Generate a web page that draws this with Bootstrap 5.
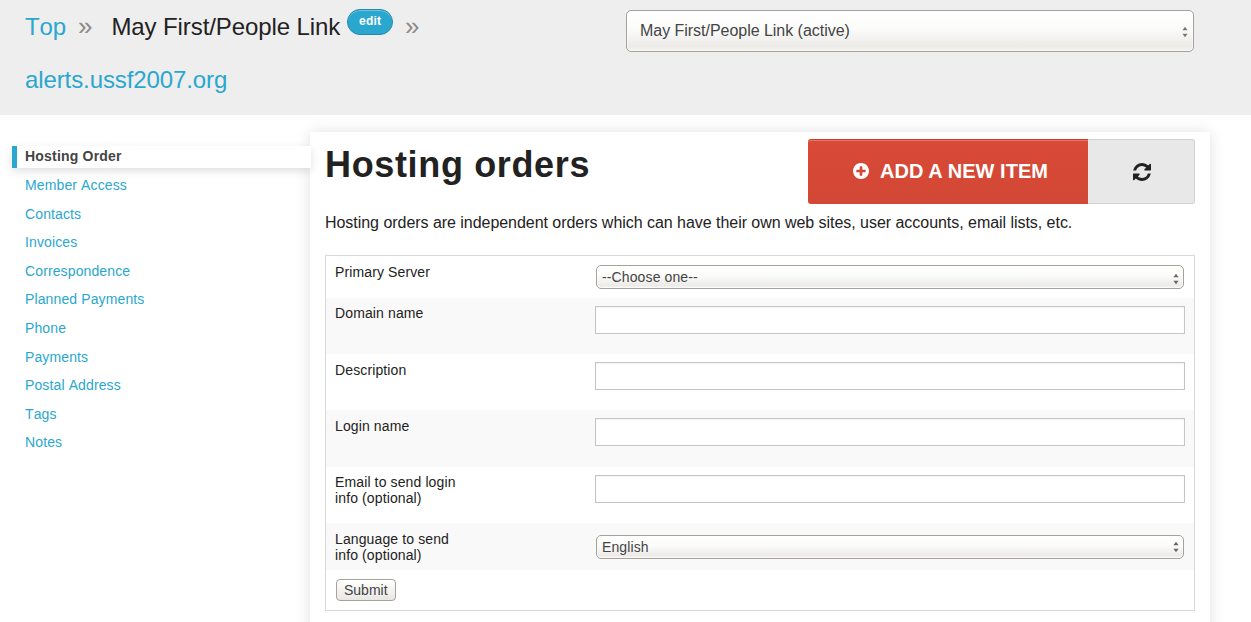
<!DOCTYPE html>
<html lang="en">
<head>
<meta charset="utf-8">
<title>Hosting orders</title>
<link href="https://cdn.jsdelivr.net/npm/bootstrap@5.3.0/dist/css/bootstrap.min.css" rel="stylesheet">
<style>
html,body{height:622px;overflow:hidden}
body{font-family:"Liberation Sans",Arial,sans-serif;font-size:14px;color:#222;background:#fff;font-kerning:none;letter-spacing:.12px}
a{color:#2aa7cf;text-decoration:none}
.top-band{height:115px;background:#eee;padding-left:25px}
.crumbs{width:601px;font-size:24px;line-height:27px;letter-spacing:-.1px}
.crumb-line{height:27px;margin-top:9px;white-space:nowrap}
.crumb-line.second{margin-top:30px}
.crumb-sep{color:#8a8a8a;font-size:26px;margin:0 19px 0 12px}
.crumb-sep.last{margin:0 0 0 12px}
.crumb-edit{display:inline-block;vertical-align:10px;height:26px;width:46px;margin-left:7px;border-radius:13px;background:#2aa7cf;border:1px solid #2089ab;color:#fff;font-size:12px;font-weight:700;line-height:22px;text-align:center;letter-spacing:.2px;box-shadow:inset 0 1px 0 rgba(255,255,255,.35)}
.native-pick{appearance:none;-webkit-appearance:none;display:block;color:#444;font-family:inherit;letter-spacing:.05px;border:1px solid #a5a19b;border-radius:5px;background-color:#f6f5f3;
 background-image:linear-gradient(to bottom,#fff 0,#fbfbfa 45%,#ecebe8 88%,#f5f4f2 100%);box-shadow:inset 0 0 0 1px rgba(255,255,255,.6)}
.pick-wrap{position:relative}
.pick-arrows{position:absolute;right:5px;top:50%;margin-top:0;width:6px;height:12px;pointer-events:none}
.arrows-top{right:6px}
.account-pick{width:568px;height:42px;margin-top:10px;padding:0 13px;font-size:16px;letter-spacing:-.03px}
.form-pick{width:588px;height:24px;padding:0 5px;font-size:14px;margin:0;letter-spacing:.12px}
.side-col{width:310px;padding-top:31.4px;flex:none}
.side-item{display:block;height:22px;margin-bottom:6.6px;padding-left:25px;line-height:20px;font-size:14px}
.side-item.current{position:relative;margin-left:12px;width:299px;padding-left:8px;border-left:5px solid #2aa7cf;background:#fff;color:#444;font-weight:700;letter-spacing:.2px;box-shadow:0 3px 8px rgba(0,0,0,.13);z-index:2}
.panel-main{position:relative;width:900px;height:520px;margin-top:17px;background:#fff;padding:7px 15px 0;box-shadow:0 0 14px rgba(0,0,0,.12);z-index:1}
.panel-title{font-size:36px;font-weight:700;line-height:52px;margin:0;color:#222;letter-spacing:.65px}
.action-group{height:65px}
.action-add{width:280px;height:65px;padding:0 0 2px 5px;border:0;border-top:1px solid #c8412f;border-radius:3px 0 0 3px;background:linear-gradient(#d94a37,#d24735);color:#fff;font-size:20px;font-weight:700;letter-spacing:.05px;box-shadow:inset 0 1px 0 rgba(255,255,255,.25)}
.action-add svg{margin:-3px 11px 0 0;vertical-align:middle}
.action-refresh{width:107px;padding:0 0 0 2px;border:1px solid #d2d2d2;border-left:0;border-radius:0 3px 3px 0;background:#e8e8e8;color:#222}
.panel-intro{font-size:16px;line-height:20px;margin:9px 0 22px;letter-spacing:-.04px}
.form-box{border:1px solid #d8d8d8;height:356px}
.field-line{display:flex;padding-left:9px}
.field-line.alt{background:#f9f9f9}
.field-name{width:260px;flex:none;line-height:16px;padding-top:8px}
.field-name.up{padding-top:7px}
.field-text{width:590px;height:28px;border:1px solid #c4c4c4;background:#fff;display:block;box-shadow:inset 0 1px 2px rgba(0,0,0,.05)}
.h42{height:42px}.h56{height:56px}.h57{height:57px}.h47{height:47px}
.pt-sel{padding-top:9px;padding-left:1px}
.pt-sel.lower{padding-top:12px}
.pt-inp{padding-top:8px}
.send-btn{display:block;height:22px;padding:0 7px;margin:9px 0 0 10px;font-size:14px;line-height:20px;color:#444;border:1px solid #a5a19b;border-radius:4px;background:linear-gradient(#fff,#e9e7e4)}
</style>
</head>
<body>
<header class="top-band d-flex">
  <div class="crumbs">
    <div class="crumb-line"><a href="#">Top</a><span class="crumb-sep">»</span><span>May First/People Link</span><a class="crumb-edit" href="#">edit</a><span class="crumb-sep last">»</span></div>
    <div class="crumb-line second"><a href="#">alerts.ussf2007.org</a></div>
  </div>
  <div class="pick-wrap align-self-start">
    <select class="native-pick account-pick"><option>May First/People Link (active)</option></select>
    <svg class="pick-arrows arrows-top" viewBox="0 0 7 12"><path d="M3.5 0 6.5 4H.5zM3.5 12 .5 8h6z" fill="#777"/></svg>
  </div>
</header>
<div class="d-flex">
  <nav class="side-col">
    <a class="side-item current" href="#">Hosting Order</a>
    <a class="side-item" href="#">Member Access</a>
    <a class="side-item" href="#">Contacts</a>
    <a class="side-item" href="#">Invoices</a>
    <a class="side-item" href="#">Correspondence</a>
    <a class="side-item" href="#">Planned Payments</a>
    <a class="side-item" href="#">Phone</a>
    <a class="side-item" href="#">Payments</a>
    <a class="side-item" href="#">Postal Address</a>
    <a class="side-item" href="#">Tags</a>
    <a class="side-item" href="#">Notes</a>
  </nav>
  <main class="panel-main">
    <div class="d-flex justify-content-between align-items-start">
      <h1 class="panel-title">Hosting orders</h1>
      <div class="action-group d-flex">
        <button class="action-add" type="button"><svg width="16" height="16" viewBox="0 0 1536 1536" fill="#fff"><path d="M1216 832v-128q0-26-19-45t-45-19h-256v-256q0-26-19-45t-45-19h-128q-26 0-45 19t-19 45v256h-256q-26 0-45 19t-19 45v128q0 26 19 45t45 19h256v256q0 26 19 45t45 19h128q26 0 45-19t19-45v-256h256q26 0 45-19t19-45zm320-64q0 209-103 385.5t-279.5 279.5-385.5 103-385.5-103-279.5-279.5-103-385.5 103-385.5 279.5-279.5 385.5-103 385.5 103 279.5 279.5 103 385.5z"/></svg>ADD A NEW ITEM</button>
        <button class="action-refresh" type="button" aria-label="Refresh"><svg width="18" height="18" viewBox="0 0 1536 1536" fill="#222"><path d="M1511 928q0 5-1 7-64 268-268 434.5t-478 166.5q-146 0-282.5-55t-243.5-157l-129 129q-19 19-45 19t-45-19-19-45v-448q0-26 19-45t45-19h448q26 0 45 19t19 45-19 45l-137 137q71 66 161 102t187 36q134 0 250-65t186-179q11-17 53-117 8-23 30-23h192q13 0 22.5 9.5t9.5 22.5zm25-800v448q0 26-19 45t-45 19h-448q-26 0-45-19t-19-45 19-45l138-138q-148-137-349-137-134 0-250 65t-186 179q-11 17-53 117-8 23-30 23h-199q-13 0-22.5-9.5t-9.5-22.5v-7q65-268 270-434.5t480-166.5q146 0 284 55.5t245 156.5l130-129q19-19 45-19t45 19 19 45z"/></svg></button>
      </div>
    </div>
    <p class="panel-intro">Hosting orders are independent orders which can have their own web sites, user accounts, email lists, etc.</p>
    <form class="form-box">
      <div class="field-line h42"><div class="field-name">Primary Server</div><div class="pt-sel pick-wrap align-self-start"><select class="native-pick form-pick"><option>--Choose one--</option></select><svg class="pick-arrows" viewBox="0 0 7 12"><path d="M3.5 0 6.5 4H.5zM3.5 12 .5 8h6z" fill="#666"/></svg></div></div>
      <div class="field-line alt h56"><div class="field-name up">Domain name</div><div class="pt-inp"><input class="field-text" type="text"></div></div>
      <div class="field-line h56"><div class="field-name">Description</div><div class="pt-inp"><input class="field-text" type="text"></div></div>
      <div class="field-line alt h57"><div class="field-name">Login name</div><div class="pt-inp"><input class="field-text" type="text"></div></div>
      <div class="field-line h56"><div class="field-name up">Email to send login<br>info (optional)</div><div class="pt-inp"><input class="field-text" type="text"></div></div>
      <div class="field-line alt h47"><div class="field-name">Language to send<br>info (optional)</div><div class="pt-sel lower pick-wrap align-self-start"><select class="native-pick form-pick"><option>English</option></select><svg class="pick-arrows" viewBox="0 0 7 12"><path d="M3.5 0 6.5 4H.5zM3.5 12 .5 8h6z" fill="#666"/></svg></div></div>
      <button class="send-btn" type="button">Submit</button>
    </form>
  </main>
</div>
<script src="https://cdn.jsdelivr.net/npm/bootstrap@5.3.0/dist/js/bootstrap.bundle.min.js"></script>
</body>
</html>
